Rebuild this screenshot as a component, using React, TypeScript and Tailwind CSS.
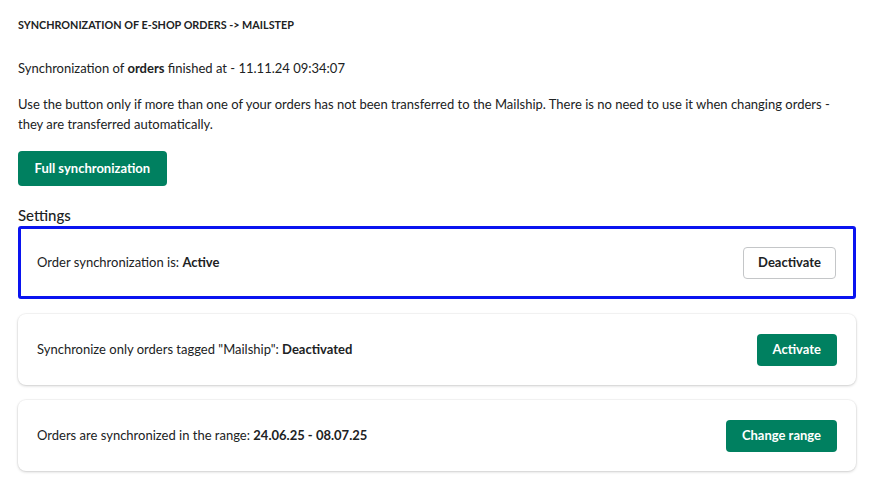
import React from 'react';

const font = { fontFamily: 'Lato, "Noto Sans", sans-serif' };

interface SettingRowProps {
  label: string;
  value: string;
  action: string;
  primary?: boolean;
  focused?: boolean;
}

const SettingRow: React.FC<SettingRowProps> = ({ label, value, action, primary, focused }) => (
  <div
    className={`flex items-center justify-between bg-white ${
      focused
        ? 'h-[73px] border-[3px] border-[#0a14f0] rounded-[3px] pl-[16px] pr-[17px]'
        : 'h-[71px] rounded-lg pl-[19px] pr-[19px] shadow-[0_1px_3px_rgba(0,0,0,0.18),0_0_0_1px_rgba(0,0,0,0.03)]'
    }`}
  >
    <p className="text-[13px] text-[#202223]">
      {label} <span className="font-bold">{value}</span>
    </p>
    <button
      className={`h-[32px] rounded-[4px] text-[13px] font-bold ${
        primary
          ? 'bg-[#008060] text-white px-4'
          : 'bg-white text-[#202223] border border-[#c4c6c8] px-[14px]'
      }`}
    >
      {action}
    </button>
  </div>
);

export default function App() {
  return (
    <div className="min-h-screen bg-white px-[18px] pt-[18px] text-[#202223]" style={font}>
      <h1 className="text-[10.8px] font-bold uppercase leading-[14px]">
        Synchronization of e-shop orders -&gt; Mailstep
      </h1>

      <p className="mt-[26px] text-[13px] leading-[20px]">
        Synchronization of <span className="font-bold">orders</span> finished at - 11.11.24 09:34:07
      </p>

      <p className="mt-[16px] text-[13px] leading-[20px] pr-1">
        Use the button only if more than one of your orders has not been transferred to the Mailship. There is no need to use it when changing orders - they are transferred automatically.
      </p>

      <button className="mt-[17px] h-[35px] rounded-[4px] bg-[#008060] px-[16.5px] text-[13px] font-bold text-white">
        Full synchronization
      </button>

      <h2 className="mt-[19px] text-[15px] leading-[20px] font-medium">Settings</h2>

      <div className="mt-[1px] flex flex-col gap-[15px] w-[838px]">
        <SettingRow label="Order synchronization is:" value="Active" action="Deactivate" focused />
        <SettingRow
          label={'Synchronize only orders tagged "Mailship":'}
          value="Deactivated"
          action="Activate"
          primary
        />
        <SettingRow
          label="Orders are synchronized in the range:"
          value="24.06.25 - 08.07.25"
          action="Change range"
          primary
        />
      </div>
    </div>
  );
}
